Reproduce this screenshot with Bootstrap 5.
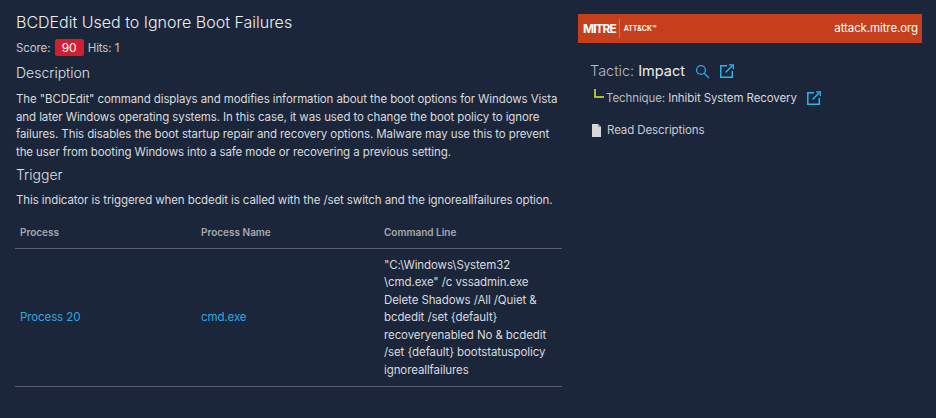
<!DOCTYPE html>
<html lang="en">
<head>
<meta charset="utf-8">
<title>BCDEdit</title>
<link rel="stylesheet" href="https://cdn.jsdelivr.net/npm/bootstrap@5.3.0/dist/css/bootstrap.min.css">
<style>
html,body{height:100%;overflow:hidden}
body{background:#1b263a;color:#d5d7da;font-family:Inter,"Liberation Sans",sans-serif;font-size:11.5px;letter-spacing:-.1px;line-height:17.5px;font-weight:400}
.page-wrap{padding:12px 14px 0 15px;gap:16px}
.left-col{width:547px;flex:none}
.right-col{width:344px;flex:none;margin-top:2px}
.txt-in{padding-left:1px}
.ttl{font-size:16px;letter-spacing:0;line-height:20px;font-weight:300;color:#eceef0;margin:0 0 7px}
.score-line{color:#c6c9cd;line-height:18px;margin-bottom:7px}
.score-pill{display:inline-block;background:#d01f31;color:#fff;border-radius:2px;width:29px;height:17px;line-height:17px;text-align:center;margin:0 1px 0 1px;font-size:12px}
.sub{font-size:14px;letter-spacing:0;line-height:18px;font-weight:300;color:#dfe1e4;margin:0 0 8px}
.sub-first{margin-bottom:9px}
.desc{margin:0 0 6px;color:#d9dbde}
.desc-first{margin-bottom:5px}
.tbl{width:547px;margin-top:8px;border-collapse:collapse;table-layout:fixed}
.tbl th{font-size:10px;font-weight:600;color:#a6a9ae;padding:5px 5px 7px;line-height:18px;border-bottom:1px solid #5a606d;letter-spacing:0}
.tbl td{padding:8px 5px 7px;border-bottom:1px solid #5a606d;vertical-align:middle;color:#d9dbde}
.tbl th:nth-child(n+2),.tbl td:nth-child(n+2){padding-left:0}
.tbl a{color:#2fa9e0;text-decoration:none}
.c1{width:186px}.c2{width:183px}
.mitre{background:#c63f1d;height:29px;color:#fff;padding:0 4px 0 5px}
.mitre-logo{font-size:12px;font-weight:700;letter-spacing:-1px;padding-right:3px;border-right:1px solid #d96f50;line-height:19px}
.attck{font-size:7px;font-weight:600;margin-left:4px;letter-spacing:0}
.mitre-url{font-size:11.5px;font-weight:400}
.tactic{font-size:14.5px;letter-spacing:0;line-height:18px;margin:19px 0 0 12px;color:#b9bcc1;font-weight:300}
.tactic b{font-weight:400;color:#eceef0}
.tech{margin:9px 0 0 16px;line-height:18px;color:#b9bcc1}
.tech span b{font-weight:400;color:#d5d7da}
.elbow{width:10px;height:9px;border-left:2px solid #a9bd35;border-bottom:2px solid #a9bd35;margin:-9px 2px 0 0;flex:none}
.read{margin:15px 0 0 14px;color:#c9ccd0}
.ico-gap{margin-left:10px}
.doc-ico{margin-right:6px}
</style>
</head>
<body>
<div class="d-flex page-wrap">
  <div class="left-col">
    <div class="txt-in">
    <h1 class="ttl">BCDEdit Used to Ignore Boot Failures</h1>
    <div class="score-line">Score: <span class="score-pill">90</span> Hits: 1</div>
    <h2 class="sub sub-first">Description</h2>
    <p class="desc desc-first">The "BCDEdit" command displays and modifies information about the boot options for Windows Vista and later Windows operating systems. In this case, it was used to change the boot policy to ignore failures. This disables the boot startup repair and recovery options. Malware may use this to prevent the user from booting Windows into a safe mode or recovering a previous setting.</p>
    <h2 class="sub">Trigger</h2>
    <p class="desc">This indicator is triggered when bcdedit is called with the /set switch and the ignoreallfailures option.</p>
    </div>
    <table class="tbl">
      <colgroup><col class="c1"><col class="c2"><col></colgroup>
      <thead><tr><th>Process</th><th>Process Name</th><th>Command Line</th></tr></thead>
      <tbody><tr>
        <td><a href="#">Process 20</a></td>
        <td><a href="#">cmd.exe</a></td>
        <td>"C:\Windows\System32<br>\cmd.exe" /c vssadmin.exe<br>Delete Shadows /All /Quiet &amp;<br>bcdedit /set {default}<br>recoveryenabled No &amp; bcdedit<br>/set {default} bootstatuspolicy<br>ignoreallfailures</td>
      </tr></tbody>
    </table>
  </div>
  <div class="right-col">
    <div class="mitre d-flex align-items-center justify-content-between">
      <div class="d-flex align-items-center"><span class="mitre-logo">MITRE</span><span class="attck">ATT&amp;CK&#8482;</span></div>
      <span class="mitre-url">attack.mitre.org</span>
    </div>
    <div class="tactic d-flex align-items-center">
      <span>Tactic: <b>Impact</b></span>
      <svg class="ico-gap" width="15" height="15" viewBox="0 0 15 15" fill="none" stroke="#2fa9e0" stroke-width="1.3"><circle cx="6" cy="6" r="4.4"/><path d="M9.2 9.2 14 14"/></svg>
      <svg class="ico-gap" width="14" height="14" viewBox="0 0 14 14" fill="none" stroke="#2fb4ee" stroke-width="1.5"><path d="M7 1.7H.8v11.5h11.5V7"/><path d="M5.5 8.5 12.5 1.5"/><path d="M9 .8h4.3v4.5" stroke-width="1.3"/></svg>
    </div>
    <div class="tech d-flex align-items-center">
      <span class="elbow"></span>
      <span>Technique: <b>Inhibit System Recovery</b></span>
      <svg class="ico-gap" width="14" height="14" viewBox="0 0 14 14" fill="none" stroke="#2fb4ee" stroke-width="1.5"><path d="M7 1.7H.8v11.5h11.5V7"/><path d="M5.5 8.5 12.5 1.5"/><path d="M9 .8h4.3v4.5" stroke-width="1.3"/></svg>
    </div>
    <div class="read d-flex align-items-center">
      <svg class="doc-ico" width="9" height="13" viewBox="0 0 9 13"><path fill="#d5d7da" d="M0 0h6l3 3v10H0z"/><path fill="#8f939a" d="M6 0l3 3H6z"/></svg>
      <span>Read Descriptions</span>
    </div>
  </div>
</div>
</body>
</html>
